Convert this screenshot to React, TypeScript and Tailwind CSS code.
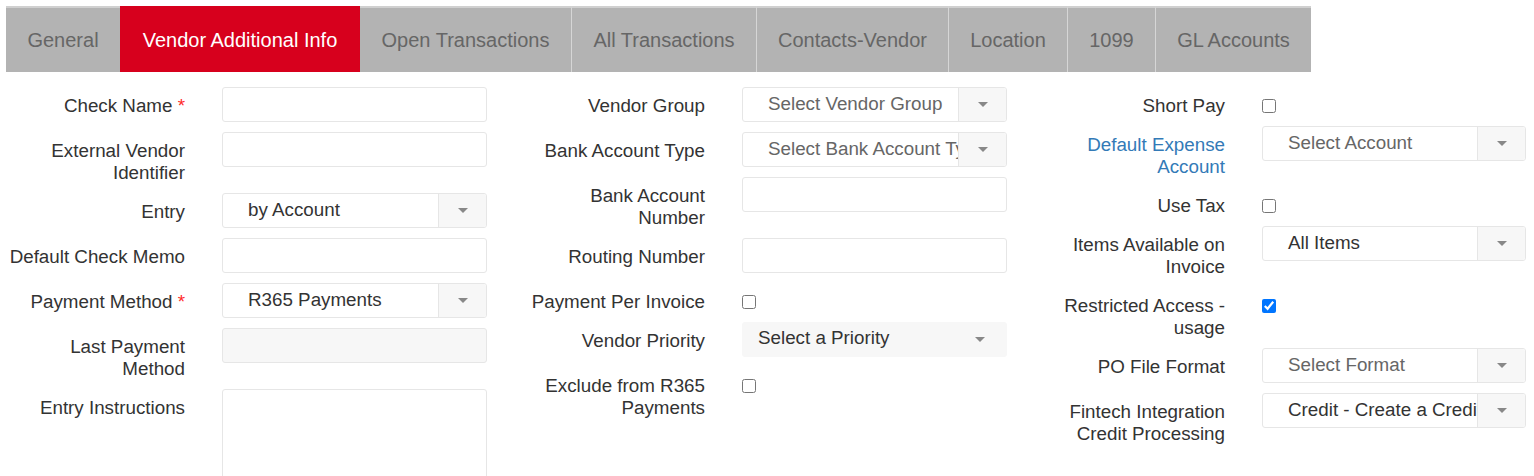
import React from 'react';

type Field =
  | { kind: 'input'; label: string; required?: boolean; disabled?: boolean }
  | { kind: 'textarea'; label: string }
  | { kind: 'select'; label: string; value: string; placeholder?: boolean; required?: boolean; link?: boolean }
  | { kind: 'plain'; label: string; value: string }
  | { kind: 'check'; label: string; checked?: boolean };

const tabs = [
  { name: 'General', w: 'w-[114px]' },
  { name: 'Vendor Additional Info', w: 'w-[240px]', active: true },
  { name: 'Open Transactions', w: 'w-[211px]' },
  { name: 'All Transactions', w: 'w-[185px]' },
  { name: 'Contacts-Vendor', w: 'w-[192px]' },
  { name: 'Location', w: 'w-[119px]' },
  { name: '1099', w: 'w-[88px]' },
  { name: 'GL Accounts', w: 'w-[156px]' },
];

const columns: Field[][] = [
  [
    { kind: 'input', label: 'Check Name', required: true },
    { kind: 'input', label: 'External Vendor Identifier' },
    { kind: 'select', label: 'Entry', value: 'by Account' },
    { kind: 'input', label: 'Default Check Memo' },
    { kind: 'select', label: 'Payment Method', value: 'R365 Payments', required: true },
    { kind: 'input', label: 'Last Payment Method', disabled: true },
    { kind: 'textarea', label: 'Entry Instructions' },
  ],
  [
    { kind: 'select', label: 'Vendor Group', value: 'Select Vendor Group', placeholder: true },
    { kind: 'select', label: 'Bank Account Type', value: 'Select Bank Account Type', placeholder: true },
    { kind: 'input', label: 'Bank Account Number' },
    { kind: 'input', label: 'Routing Number' },
    { kind: 'check', label: 'Payment Per Invoice' },
    { kind: 'plain', label: 'Vendor Priority', value: 'Select a Priority' },
    { kind: 'check', label: 'Exclude from R365 Payments' },
  ],
  [
    { kind: 'check', label: 'Short Pay' },
    { kind: 'select', label: 'Default Expense Account', value: 'Select Account', placeholder: true, link: true },
    { kind: 'check', label: 'Use Tax' },
    { kind: 'select', label: 'Items Available on Invoice', value: 'All Items' },
    { kind: 'check', label: 'Restricted Access - usage', checked: true },
    { kind: 'select', label: 'PO File Format', value: 'Select Format', placeholder: true },
    { kind: 'select', label: 'Fintech Integration Credit Processing', value: 'Credit - Create a Credit Memo' },
  ],
];

const Caret = () => (
  <span className="block w-0 h-0 border-x-[5px] border-x-transparent border-t-[5px] border-t-[#888]" />
);

const Control: React.FC<{ f: Field }> = ({ f }) => {
  if (f.kind === 'input') {
    return (
      <div
        className={`h-[35px] rounded-[3px] border border-[#e6e6e6] ${f.disabled ? 'bg-[#f7f7f7]' : 'bg-white'}`}
      />
    );
  }
  if (f.kind === 'textarea') {
    return <div className="h-[110px] rounded-[3px] border border-[#e6e6e6] bg-white" />;
  }
  if (f.kind === 'check') {
    return (
      <input
        type="checkbox"
        readOnly
        checked={!!f.checked}
        className="m-0 mt-[12px] block w-[14px] h-[14px]"
      />
    );
  }
  if (f.kind === 'plain') {
    return (
      <div className="h-[35px] rounded-[3px] bg-[#f7f7f7] flex items-center pl-[16px] pr-[22px]">
        <span className="flex-1 pb-[3px] text-[#333] whitespace-nowrap">{f.value}</span>
        <Caret />
      </div>
    );
  }
  return (
    <div className="h-[35px] rounded-[3px] border border-[#e6e6e6] bg-white flex overflow-hidden">
      <div
        className={`flex-1 min-w-0 overflow-hidden whitespace-nowrap pl-[25px] pt-[2px] ${f.placeholder ? 'text-[#666]' : 'text-[#333]'}`}
      >
        {f.value}
      </div>
      <div className="w-[48px] shrink-0 border-l border-[#e6e6e6] bg-[#f7f7f7] flex items-center justify-center">
        <Caret />
      </div>
    </div>
  );
};

const Row: React.FC<{ f: Field; last?: boolean }> = ({ f, last }) => {
  const isLink = f.kind === 'select' && f.link;
  const required = (f.kind === 'input' || f.kind === 'select') && f.required;
  return (
    <div className="flex items-start mb-[10px]">
      <label
        className={`w-[185px] shrink-0 pl-[4px] pt-[7px] text-right leading-[22px] ${isLink ? 'text-[#337ab7]' : 'text-[#333]'}`}
      >
        <span className="relative top-[1px]">
          {f.label}
          {required && <span className="text-[#ff2a2a]"> *</span>}
        </span>
      </label>
      <div className={`ml-[37px] ${last ? 'w-[264px]' : 'w-[265px]'}`}>
        <Control f={f} />
      </div>
    </div>
  );
};

export default function App() {
  return (
    <div className="w-[1534px] h-[476px] overflow-hidden bg-white font-['Liberation_Sans',Arial,sans-serif]">
      <div className="pl-[6px] pt-[6px] flex">
        {tabs.map((t, i) => (
          <div
            key={t.name}
            className={`${t.w} h-[66px] flex items-center justify-center text-[20px] whitespace-nowrap ${
              t.active
                ? 'bg-[#d7001d] text-white border-t-2 border-t-[#d7001d]'
                : `bg-[#b3b3b3] text-[#666] border-t-2 border-t-[#d0d0d0] ${i > 0 && !tabs[i - 1].active ? 'border-l border-l-[#d6d6d6]' : ''}`
            }`}
          >
            <span className="pb-[1px]">{t.name}</span>
          </div>
        ))}
      </div>
      <div className="grid grid-cols-[520px_520px_494px] pt-[15px] text-[18.8px]">
        {columns.map((col, ci) => (
          <div key={ci}>
            {col.map((f) => (
              <Row key={f.label} f={f} last={ci === 2} />
            ))}
          </div>
        ))}
      </div>
    </div>
  );
}
